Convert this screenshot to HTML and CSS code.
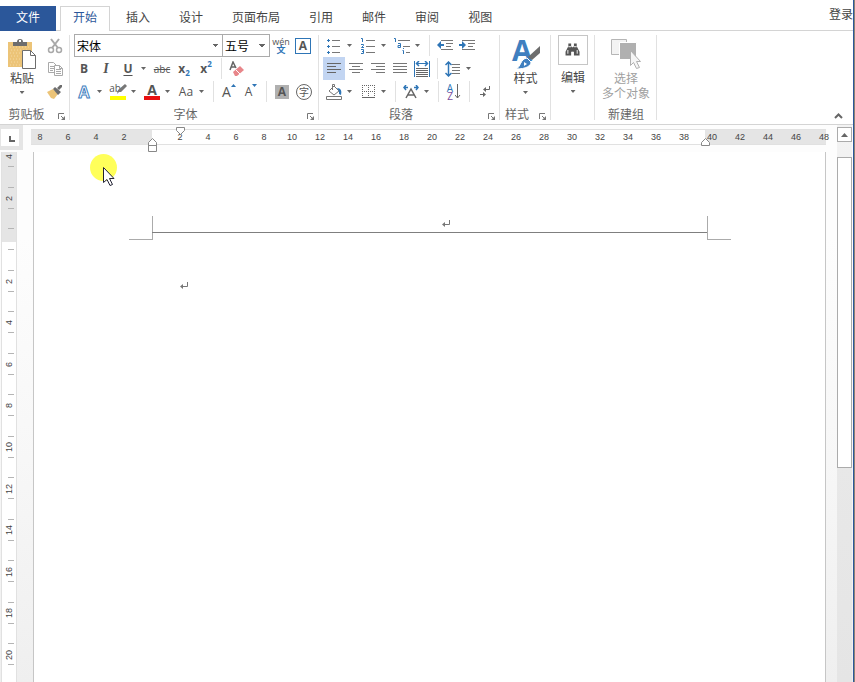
FILE: index.html
```html
<!DOCTYPE html>
<html lang="zh-CN">

<head>
    <meta charset="UTF-8">
    <meta name="viewport" content="width=device-width, initial-scale=1.0">
    <title>文档</title>
    <link rel="stylesheet" href="styles.css">
</head>

<body>
    <div class="window">

        <nav class="tabs">
            <button class="tab file">文件</button>
            <button class="tab active">开始</button>
            <button class="tab">插入</button>
            <button class="tab">设计</button>
            <button class="tab">页面布局</button>
            <button class="tab">引用</button>
            <button class="tab">邮件</button>
            <button class="tab">审阅</button>
            <button class="tab">视图</button>
            <a class="login" href="#">登录</a>
        </nav>

        <div class="ribbon">
            <section class="group clipboard">
                <div class="group-body">
                    <button class="big">
                        <svg width="30" height="32" viewBox="0 0 30 32">
                            <path fill="#ecc478" d="M1 4h24v25H1z" />
                            <path stroke="#f5d9a3" stroke-dasharray="1 2" d="M3 9h20M4 12h18M3 15h12M4 18h9M3 21h12M4 24h9M3 27h12" />
                            <path fill="#6d6d6d" d="M6 4h4a3 3 0 0 1 6 0h4v4H6z" />
                            <path fill="#fff" d="M12 2h2v2h-2z" />
                            <path fill="#fff" stroke="#6d6d6d" d="M15.500 12.500h8l5 5v13h-13z" />
                            <path fill="none" stroke="#6d6d6d" d="M23.500 12.500v5h5" />
                        </svg>
                        <span>粘贴</span>
                        <i class="arrow"></i>
                    </button>
                    <div class="icon-column">
                        <button class="tool" title="剪切">
                            <svg width="16" height="16" viewBox="0 0 16 16" fill="none" stroke="#a9a9a9">
                                <path stroke-width="2" d="M4 1l7 9M12 1L5 10" />
                                <circle cx="4" cy="12" r="2.500" stroke-width="1.500" />
                                <circle cx="12" cy="12" r="2.500" stroke-width="1.500" />
                            </svg>
                        </button>
                        <button class="tool" title="复制">
                            <svg width="16" height="16" viewBox="0 0 16 16" fill="#fff" stroke="#a9a9a9">
                                <path d="M1.500 1.500h5l3 3v7h-8zM3 5.500h4M3 7.500h4M3 9.500h3" />
                                <path d="M7.500 4.500h5l3 3v7h-8zM9 8.500h5M9 10.500h5M9 12.500h5M12.500 4.500v3h3" />
                            </svg>
                        </button>
                        <button class="tool" title="格式刷">
                            <svg width="16" height="16" viewBox="0 0 16 16">
                                <path fill="#ecc478" d="M0 8l6-3 5 5-4 5-3-1z" />
                                <path fill="#6d6d6d" d="M6 5l2-2 6 5-3 3zM10 4l3-3 2 0 0 2-3 3z" />
                            </svg>
                        </button>
                    </div>
                </div>
                <div class="group-footer">
                    <span>剪贴板</span>
                    <button class="launcher" title="剪贴板设置"><svg width="8" height="8" viewBox="0 0 8 8"><path fill="none" stroke="#777" d="M.5 6V.5H6M3 3l3 3" /><path fill="#777" d="M7 3v4H3z" /></svg></button>
                </div>
            </section>

            <section class="group font">
                <div class="group-body rows">
                    <div class="row combos">
                        <select class="font-name" aria-label="字体"><option>宋体</option></select>
                        <select class="font-size" aria-label="字号"><option>五号</option></select>
                        <button class="tool pinyin" title="拼音指南"><span>wén</span><b>文</b></button>
                        <button class="tool" title="字符边框"><span class="boxed">A</span></button>
                    </div>
                    <div class="row">
                        <button class="tool latin bold">B</button>
                        <button class="tool serif">I</button>
                        <button class="tool latin bold under">U</button>
                        <button class="caret" title="下划线"><i class="arrow"></i></button>
                        <button class="tool latin strike">abc</button>
                        <button class="tool latin bold">x<sub>2</sub></button>
                        <button class="tool latin bold">x<sup>2</sup></button>
                        <i class="sep"></i>
                        <button class="tool" title="清除格式">
                            <svg width="16" height="16" viewBox="0 0 16 16">
                                <path fill="none" stroke="#666" stroke-width="1.500" d="M1 9l3-8 3 6M2 6h4" />
                                <path fill="#e8868a" d="M4 11l7-6 4 4-7 6-2 0z" />
                                <path stroke="#fff" d="M7 9l4 4" />
                            </svg>
                        </button>
                    </div>
                    <div class="row">
                        <button class="tool latin outlined">A</button>
                        <button class="caret" title="文本效果"><i class="arrow"></i></button>
                        <button class="tool" title="突出显示">
                            <span class="swatch yellow">ab<svg width="10" height="11" viewBox="0 0 10 11"><path fill="#777" d="M8 0l2 2-6 6-2 0-2 2 1-4z" /></svg></span>
                        </button>
                        <button class="caret" title="突出显示颜色"><i class="arrow"></i></button>
                        <button class="tool" title="字体颜色"><span class="swatch red">A</span></button>
                        <button class="caret" title="更多字体颜色"><i class="arrow"></i></button>
                        <button class="tool latin">Aa</button>
                        <button class="caret" title="更改大小写"><i class="arrow"></i></button>
                        <i class="sep"></i>
                        <button class="tool latin grow" title="增大字号">A<svg width="5" height="3" viewBox="0 0 5 3"><path fill="#2e75b6" d="M0 3l2.500-3L5 3z" /></svg></button>
                        <button class="tool latin shrink" title="减小字号">A<svg width="5" height="3" viewBox="0 0 5 3"><path fill="#2e75b6" d="M0 0l2.500 3L5 0z" /></svg></button>
                        <i class="sep"></i>
                        <button class="tool" title="字符底纹"><span class="shaded">A</span></button>
                        <button class="tool" title="带圈字符"><span class="circled">字</span></button>
                    </div>
                </div>
                <div class="group-footer">
                    <span>字体</span>
                    <button class="launcher" title="字体设置"><svg width="8" height="8" viewBox="0 0 8 8"><path fill="none" stroke="#777" d="M.5 6V.5H6M3 3l3 3" /><path fill="#777" d="M7 3v4H3z" /></svg></button>
                </div>
            </section>

            <section class="group paragraph">
                <div class="group-body rows">
                    <div class="row">
                        <button class="tool" title="项目符号">
                            <svg width="16" height="16" viewBox="0 0 16 16">
                                <path fill="#2e75b6" d="M2 1h1v1h1v1H3v1H2V3H1V2h1zM2 7h1v1h1v1H3v1H2V9H1V8h1zM2 13h1v1h1v1H3v1H2v-1H1v-1h1z" />
                                <path stroke="#777" d="M6 2.500h8M6 8.500h8M6 14.500h8" />
                            </svg>
                        </button>
                        <button class="caret" title="项目符号库"><i class="arrow"></i></button>
                        <button class="tool" title="编号">
                            <svg width="16" height="16" viewBox="0 0 16 16">
                                <path fill="none" stroke="#2e75b6" d="M1 .5h1.500V4M1 6.500h2.500v1L1.500 9.500H4M1 11.500h2.500v4H1M2 13.500h1.500" />
                                <path stroke="#777" d="M6 2.500h9M6 8.500h9M6 14.500h9" />
                            </svg>
                        </button>
                        <button class="caret" title="编号库"><i class="arrow"></i></button>
                        <button class="tool" title="多级列表">
                            <svg width="18" height="16" viewBox="0 0 18 16">
                                <path fill="none" stroke="#2e75b6" d="M1 .5h1.500V4M5 5.500h2.500v4H5v-2h2M10.500 10v1M9.500 12.500h1V16" />
                                <path stroke="#777" d="M5 2.500h12M10 8.500h7M13 14.500h4" />
                            </svg>
                        </button>
                        <button class="caret" title="列表库"><i class="arrow"></i></button>
                        <i class="sep"></i>
                        <button class="tool" title="减少缩进量">
                            <svg width="16" height="11" viewBox="0 0 16 11">
                                <path stroke="#777" d="M4 .5h12M9 3.500h7M9 6.500h5M4 9.500h12" />
                                <path fill="#2e75b6" d="M0 5l4-4v3h3v2H4v3z" />
                            </svg>
                        </button>
                        <button class="tool" title="增加缩进量">
                            <svg width="16" height="11" viewBox="0 0 16 11">
                                <path stroke="#777" d="M3 .5h13M9 3.500h7M9 6.500h5M3 9.500h13" />
                                <path fill="#2e75b6" d="M7 5L3 1v3H0v2h3v3z" />
                            </svg>
                        </button>
                    </div>
                    <div class="row">
                        <button class="tool selected" title="左对齐">
                            <svg width="14" height="11" viewBox="0 0 14 11"><path stroke="#666" d="M0 .5h14M0 3.500h9M0 6.500h14M0 9.500h9" /></svg>
                        </button>
                        <button class="tool" title="居中">
                            <svg width="14" height="11" viewBox="0 0 14 11"><path stroke="#777" d="M0 .5h14M3 3.500h8M0 6.500h14M3 9.500h8" /></svg>
                        </button>
                        <button class="tool" title="右对齐">
                            <svg width="14" height="11" viewBox="0 0 14 11"><path stroke="#777" d="M0 .5h14M5 3.500h9M0 6.500h14M5 9.500h9" /></svg>
                        </button>
                        <button class="tool" title="两端对齐">
                            <svg width="14" height="11" viewBox="0 0 14 11"><path stroke="#777" d="M0 .5h14M0 3.500h14M0 6.500h14M0 9.500h14" /></svg>
                        </button>
                        <button class="tool" title="分散对齐">
                            <svg width="16" height="16" viewBox="0 0 16 16">
                                <path stroke="#2e75b6" d="M.5 0v16M15.500 0v16M3 2.500h10" />
                                <path fill="none" stroke="#2e75b6" stroke-width="1.500" d="M5 0L2.500 2.500 5 5M11 0l2.500 2.500L11 5" />
                                <path stroke="#666" d="M2 7.500h12M2 9.500h12M2 11.500h12M2 13.500h12M2 15.500h12" />
                            </svg>
                        </button>
                        <i class="sep"></i>
                        <button class="tool" title="行距">
                            <svg width="16" height="16" viewBox="0 0 16 16">
                                <path fill="none" stroke="#2e75b6" stroke-width="1.500" d="M3.500 1v14M.5 4l3-3 3 3M.5 12l3 3 3-3" />
                                <path stroke="#777" d="M7 3.500h8M7 6.500h8M7 9.500h8M7 12.500h8" />
                            </svg>
                        </button>
                        <button class="caret" title="行距选项"><i class="arrow"></i></button>
                    </div>
                    <div class="row">
                        <button class="tool" title="底纹">
                            <svg width="18" height="16" viewBox="0 0 18 16">
                                <path fill="#fff" stroke="#777" d="M4 7l5-5 5 5-5 4zM7.500 6V.5h2V3" />
                                <path fill="#2e75b6" d="M12 4c4 0 5 3 4 7l-2-1V7z" />
                                <path fill="#fff" stroke="#777" d="M1.500 12.500h15v3h-15z" />
                            </svg>
                        </button>
                        <button class="caret" title="底纹颜色"><i class="arrow"></i></button>
                        <button class="tool" title="边框">
                            <svg width="13" height="13" viewBox="0 0 13 13">
                                <path stroke="#666" stroke-dasharray="1 1" d="M0 .5h13M0 6.500h13M.5 0v12M6.500 0v12M12.500 0v12" />
                                <path stroke="#666" d="M0 12.500h13" />
                            </svg>
                        </button>
                        <button class="caret" title="边框选项"><i class="arrow"></i></button>
                        <i class="sep"></i>
                        <button class="tool" title="中文版式">
                            <svg width="16" height="14" viewBox="0 0 16 14">
                                <path fill="none" stroke="#666" stroke-width="1.500" d="M3 13l5-9 5 9M5 10h6" />
                                <path fill="none" stroke="#2e75b6" stroke-width="1.500" d="M3 0L1 2.500 3 5M13 0l2 2.500L13 5M1 2.500h4M11 2.500h4" />
                            </svg>
                        </button>
                        <button class="caret" title="中文版式选项"><i class="arrow"></i></button>
                        <i class="sep"></i>
                        <button class="tool sort" title="排序">
                            <span>A<b>Z</b></span>
                            <svg width="6" height="15" viewBox="0 0 6 15"><path fill="none" stroke="#666" d="M2.500 0v14M0 11l2.500 3L5 11" /></svg>
                        </button>
                        <i class="sep"></i>
                        <button class="tool" title="显示编辑标记">
                            <svg width="12" height="13" viewBox="0 0 12 13">
                                <path fill="none" stroke="#666" d="M10.500 1v3.500H5M1 9.500h5" />
                                <path fill="#666" d="M4 4.500L7 2v5zM7 9.500L4 7v5z" />
                            </svg>
                        </button>
                    </div>
                </div>
                <div class="group-footer">
                    <span>段落</span>
                    <button class="launcher" title="段落设置"><svg width="8" height="8" viewBox="0 0 8 8"><path fill="none" stroke="#777" d="M.5 6V.5H6M3 3l3 3" /><path fill="#777" d="M7 3v4H3z" /></svg></button>
                </div>
            </section>

            <section class="group styles">
                <div class="group-body">
                    <button class="big">
                        <svg width="30" height="32" viewBox="0 0 30 32">
                            <text class="style-letter" x="1" y="23">A</text>
                            <path fill="#6d6d6d" d="M29 8v7l-8 7-4-3z" />
                            <path fill="#3f7fbf" stroke="#fff" d="M16 20l4 4c0 4-5 7-15 7 5-2 4-10 11-11z" />
                            <path fill="#fff" d="M13 24l3 2-3 2z" />
                        </svg>
                        <span>样式</span>
                        <i class="arrow"></i>
                    </button>
                </div>
                <div class="group-footer">
                    <span>样式</span>
                    <button class="launcher" title="样式窗格"><svg width="8" height="8" viewBox="0 0 8 8"><path fill="none" stroke="#777" d="M.5 6V.5H6M3 3l3 3" /><path fill="#777" d="M7 3v4H3z" /></svg></button>
                </div>
            </section>

            <section class="group editing">
                <div class="group-body">
                    <button class="big">
                        <svg class="framed" width="30" height="30" viewBox="0 0 30 30">
                            <path fill="#555" d="M10 8h3v3l1 1h1l1-1V8h3v3l3 6v4h-6v-4h-3v4H7v-4l3-6z" />
                            <path stroke="#fff" d="M10 11.500h3M16 11.500h3M9.500 15v4M19.500 15v4M14.500 17v4" />
                        </svg>
                        <span>编辑</span>
                        <i class="arrow"></i>
                    </button>
                </div>
                <div class="group-footer"></div>
            </section>

            <section class="group custom">
                <div class="group-body">
                    <button class="big" disabled>
                        <svg width="30" height="32" viewBox="0 0 30 32">
                            <path fill="#f3f3f3" stroke="#b5b5b5" d="M.5 1.500h15v15H.5z" />
                            <path fill="#b0b0b0" stroke="#fff" d="M8.500 4.500h17v17h-17z" />
                            <path fill="#f5f5f5" stroke="#b0b0b0" d="M19.500 12.500v15l3-3 3 6 3-1-3-6h4z" />
                        </svg>
                        <span>选择<br>多个对象</span>
                    </button>
                </div>
                <div class="group-footer"><span>新建组</span></div>
            </section>

            <button class="collapse" title="折叠功能区">
                <svg width="9" height="6" viewBox="0 0 9 6"><path fill="none" stroke="#666" stroke-width="2" d="M1 5l3.500-3.500L8 5" /></svg>
            </button>
        </div>

        <main class="workspace">
            <div class="tab-stop"><button title="制表符"><i></i></button></div>

            <div class="h-ruler">
                <div class="scale">
                    <span>8</span><span>6</span><span>4</span><span>2</span><span></span><span>2</span><span>4</span><span>6</span><span>8</span><span>10</span><span>12</span><span>14</span><span>16</span><span>18</span><span>20</span><span>22</span><span>24</span><span>26</span><span>28</span><span>30</span><span>32</span><span>34</span><span>36</span><span>38</span><span>40</span><span>42</span><span>44</span><span>46</span><span>48</span>
                </div>
                <svg class="marker first-line" width="9" height="8" viewBox="0 0 9 8"><path fill="#fff" stroke="#888" d="M.5.5h8v3l-4 4-4-4z" /></svg>
                <svg class="marker left-indent" width="9" height="14" viewBox="0 0 9 14"><path fill="#fff" stroke="#888" d="M.5 13.500v-9l4-4 4 4v9zM.5 7.500h8" /></svg>
                <svg class="marker right-indent" width="9" height="8" viewBox="0 0 9 8"><path fill="#fff" stroke="#888" d="M.5 7.500v-3l4-4 4 4v3z" /></svg>
            </div>

            <div class="v-ruler">
                <span>4</span><span>2</span><span></span><span>2</span><span>4</span><span>6</span><span>8</span><span>10</span><span>12</span><span>14</span><span>16</span><span>18</span><span>20</span>
            </div>

            <article class="page">
                <header class="page-header">
                    <i class="corner left"></i>
                    <div class="header-text">
                        <svg width="8" height="8" viewBox="0 0 8 8"><path fill="none" stroke="#777" d="M7.500 0v4.500H2" /><path fill="#777" d="M0 4.500L3 2v5z" /></svg>
                    </div>
                    <i class="corner right"></i>
                </header>
                <p class="paragraph-text">
                    <svg width="8" height="8" viewBox="0 0 8 8"><path fill="none" stroke="#777" d="M7.500 0v4.500H2" /><path fill="#777" d="M0 4.500L3 2v5z" /></svg>
                </p>
                <div class="pointer">
                    <svg width="14" height="21" viewBox="0 0 14 21"><path fill="#fff" stroke="#223" d="M1.500 1.500v15l3.500-3 3 6 2.500-1-3-6h4.500z" /></svg>
                </div>
            </article>

            <div class="scrollbar">
                <button class="scroll-up" title="向上滚动"><svg width="7" height="4" viewBox="0 0 7 4"><path fill="#666" d="M0 4l3.500-4L7 4z" /></svg></button>
                <div class="thumb"></div>
            </div>
        </main>
    </div>
</body>

</html>
```
FILE: styles.css
```css
* {
    box-sizing: border-box;
}

body {
    margin: 0;
    padding-right: 1px;
    background: #8c8374;
    font-family: "Noto Sans CJK SC", sans-serif;
    font-size: 12px;
    line-height: 16px;
    color: #444;
}

button {
    margin: 0;
    padding: 0;
    border: none;
    background: none;
    font: inherit;
    color: inherit;
}

svg {
    display: block;
    flex: none;
}

.window {
    display: flex;
    flex-direction: column;
    height: 100vh;
    overflow: hidden;
    background: #fff;
    border-right: 1px solid #2b579a;
}

/* Tabs */
.tabs {
    display: flex;
    flex: none;
    gap: 3px;
    height: 31px;
    padding-top: 6px;
    border-bottom: 1px solid #d4d4d4;
}

.tab {
    height: 25px;
    padding: 0 12px 4px;
    border: 1px solid transparent;
    border-bottom: none;
    white-space: nowrap;
}

.tab.file {
    padding: 0 15px 4px;
    margin-right: 1px;
    background: #2b579a;
    color: #fff;
}

.tab.active {
    border-color: #d4d4d4;
    background: #fff;
    color: #2b579a;
}

.login {
    margin-left: auto;
    color: #444;
    text-decoration: none;
    white-space: nowrap;
}

/* Ribbon */
.ribbon {
    display: flex;
    flex: none;
    padding-top: 3px;
    border-bottom: 1px solid #d4d4d4;
}

.group {
    display: flex;
    flex-direction: column;
    flex: none;
    background: linear-gradient(#e1e1e1, #e1e1e1) right 1px / 1px 85px no-repeat;
}

.clipboard {
    width: 70px;
}

.font {
    width: 249px;
    padding-left: 3px;
}

.paragraph {
    width: 181px;
    padding-left: 4px;
}

.styles {
    width: 51px;
}

.editing {
    width: 44px;
}

.custom {
    width: 62px;
}

.group-body {
    display: flex;
    justify-content: center;
    height: 69px;
}

.group-body.rows {
    flex-direction: column;
}

.clipboard .group-body {
    justify-content: flex-start;
}

.row,
.icon-column {
    display: flex;
}

.icon-column {
    flex-direction: column;
}

.combos {
    padding-left: 1px;
}

.group-footer {
    display: flex;
    align-items: center;
    height: 21px;
    color: #666;
}

.group-footer span {
    flex: 1;
    text-align: center;
}

.launcher {
    display: flex;
    justify-content: center;
    width: 17px;
    padding-top: 6px;
}

.font .group-footer,
.paragraph .group-footer {
    margin-left: -4px;
}

.big {
    display: flex;
    flex-direction: column;
    align-items: center;
    width: 44px;
    padding-top: 4px;
    line-height: 15px;
    white-space: nowrap;
}

.big .arrow {
    margin-top: 6px;
}

.big:disabled {
    color: #a0a0a0;
}

.big svg {
    overflow: visible;
}

.big .framed {
    border: 1px solid #c6c6c6;
}

.editing .big {
    width: 32px;
    padding-top: 1px;
}

.editing .big span {
    padding-top: 4px;
}

.style-letter {
    font: bold 29px "Open Sans", sans-serif;
    fill: #3f7fbf;
}

.tool {
    display: flex;
    align-items: center;
    justify-content: center;
    flex: none;
    width: 22px;
    height: 23px;
    color: #555;
}

.tool.selected {
    background: #c2d5f2;
}

.caret {
    flex: none;
    width: 12px;
    height: 23px;
    padding-left: 2px;
}

.arrow {
    display: block;
    width: 5px;
    height: 3px;
    background: #666;
    clip-path: polygon(0 0, 100% 0, 50% 100%);
}

.sep {
    flex: none;
    width: 1px;
    height: 21px;
    margin: 1px 4px;
    background: #e1e1e1;
}

/* Font group */
select {
    appearance: none;
    height: 23px;
    margin: 0;
    padding: 0 2px;
    border: 1px solid #ababab;
    border-radius: 0;
    background: #fff conic-gradient(from 315deg at 50% 100%, #666 90deg, transparent 0) right 4px center / 6px 3px no-repeat;
    font: inherit;
    color: #000;
}

.font-name {
    width: 149px;
}

.font-size {
    width: 48px;
    margin-left: -1px;
}

.latin {
    font-family: "Open Sans", sans-serif;
}

.bold {
    font-weight: bold;
}

.serif {
    font-family: "Liberation Serif", serif;
    font-size: 14px;
    font-style: italic;
    font-weight: bold;
}

.under {
    text-decoration: underline;
    text-underline-offset: 2px;
}

.strike {
    font-size: 10px;
    text-decoration: line-through;
}

.tool sub,
.tool sup {
    font-size: 8px;
    line-height: 8px;
    color: #2e75b6;
}

.tool sub {
    align-self: flex-end;
    padding-bottom: 3px;
}

.tool sup {
    align-self: flex-start;
    padding-top: 3px;
}

.pinyin {
    flex-direction: column;
    font-family: "Open Sans", "Noto Sans CJK SC", sans-serif;
    font-size: 9px;
    line-height: 8px;
}

.pinyin b {
    color: #2e75b6;
}

.boxed,
.shaded,
.swatch {
    font-family: "Open Sans", sans-serif;
    font-weight: bold;
    text-align: center;
}

.boxed {
    width: 16px;
    height: 16px;
    border: 1px solid #2e75b6;
    line-height: 14px;
}

.shaded {
    width: 14px;
    height: 14px;
    background: #b0b0b0;
    line-height: 14px;
}

.circled {
    width: 16px;
    height: 16px;
    border: 1px solid #666;
    border-radius: 50%;
    font-size: 10px;
    line-height: 14px;
}

.outlined {
    font-size: 16px;
    font-weight: bold;
    color: #fff;
    -webkit-text-stroke: 1px #3f7fbf;
}

.swatch {
    display: flex;
    justify-content: center;
    width: 16px;
    height: 16px;
    border-bottom: 4px solid #ff0;
    line-height: 12px;
}

.swatch.red {
    border-color: #e81010;
    font-size: 14px;
}

.swatch.yellow {
    font-size: 10px;
    font-weight: normal;
    line-height: 8px;
}

.swatch.yellow svg {
    margin-left: -4px;
}

.grow svg,
.shrink svg {
    align-self: flex-start;
    margin-top: 4px;
}

.grow {
    font-size: 14px;
}

.sort {
    gap: 2px;
}

.sort span {
    display: flex;
    flex-direction: column;
    font: 10px/8px "Open Sans", sans-serif;
    color: #2e75b6;
}

.sort b {
    font-weight: normal;
    color: #7b4fa0;
}

.collapse {
    align-self: flex-end;
    margin-left: auto;
    padding: 5px 10px;
}

/* Document area */
.workspace {
    display: grid;
    grid-template: 27px 1fr / 33px minmax(0, 1fr) 11px 16px;
    flex: 1;
    min-height: 0;
    background: linear-gradient(#fdfdfd 20%, #f7f7f7 60%, #efefef);
}

.tab-stop {
    width: 23px;
    height: 25px;
    padding: 4px 0 0 1px;
    background: #e5e5e5;
}

.tab-stop button {
    display: flex;
    align-items: center;
    justify-content: center;
    width: 18px;
    height: 17px;
    background: #fff;
}

.tab-stop i {
    width: 6px;
    height: 6px;
    margin: 3px 0 0 3px;
    border: solid #666;
    border-width: 0 0 2px 2px;
}

.h-ruler {
    position: relative;
    height: 16px;
    margin: 4px 0 0 -2px;
    border: solid #e1e1e1;
    border-width: 1px 0;
    background: linear-gradient(90deg, #e5e5e5 121px, #fff 121px, #fff 674px, #e5e5e5 674px);
    font: 9px/14px "Liberation Sans", sans-serif;
}

.scale {
    display: flex;
    margin-left: -5px;
}

.scale span {
    flex: none;
    width: 28px;
    text-align: center;
}

.marker {
    position: absolute;
}

.first-line {
    left: 145px;
    top: -3px;
}

.left-indent {
    left: 117px;
    top: 8px;
}

.right-indent {
    left: 670px;
    top: 8px;
}

.v-ruler {
    grid-row: 2;
    grid-column: 1;
    display: flex;
    flex-direction: column;
    width: 16px;
    min-height: 0;
    margin-left: 1px;
    overflow: hidden;
    border: solid #e1e1e1;
    border-width: 0 1px;
    background: linear-gradient(#e5e5e5 90px, #fff 90px);
    font: 9px/10px "Liberation Sans", sans-serif;
}

.v-ruler span {
    display: flex;
    align-items: center;
    justify-content: center;
    flex: none;
    width: 10px;
    height: 42px;
    margin-left: 2px;
    background:
        linear-gradient(#b5b5b5, #b5b5b5) 0 10px / 6px 1px no-repeat,
        linear-gradient(#b5b5b5, #b5b5b5) 0 31px / 6px 1px no-repeat;
    writing-mode: vertical-rl;
    transform: rotate(180deg);
}

.v-ruler span:nth-child(odd) {
    height: 41px;
}

.v-ruler span:first-child {
    margin-top: -16px;
}

.page {
    grid-row: 2;
    grid-column: 2;
    position: relative;
    min-height: 0;
    border: solid #c6c6c6;
    border-width: 0 1px;
    background: #fff;
}

.page-header {
    display: flex;
    margin: 64px 94px 0 95px;
}

.corner {
    flex: none;
    width: 24px;
    height: 24px;
    border-bottom: 1px solid #ababab;
}

.corner.left {
    border-right: 1px solid #ababab;
}

.corner.right {
    border-left: 1px solid #ababab;
}

.header-text {
    display: flex;
    align-items: center;
    justify-content: center;
    flex: 1;
    height: 17px;
    margin: 0 -1px;
    padding-left: 32px;
    border-bottom: 1px solid #7f7f7f;
}

.paragraph-text {
    margin: 42px 118px 0;
    padding-left: 28px;
}

/* Mouse pointer with its highlight */
.pointer {
    position: absolute;
    left: 56px;
    top: 2px;
    width: 27px;
    height: 27px;
    padding: 12px 0 0 12px;
    border-radius: 50%;
    background: #ffff5a;
}

.scrollbar {
    grid-row: 1 / 3;
    grid-column: 4;
    display: flex;
    flex-direction: column;
    min-height: 0;
    margin-right: 1px;
    padding-top: 2px;
    background: linear-gradient(#f3f3f3, #e8e8e8 60%, #e5e5e5);
}

.scroll-up {
    display: flex;
    align-items: center;
    justify-content: center;
    flex: none;
    height: 15px;
    border: 1px solid #ababab;
    background: #fff;
}

.thumb {
    flex: none;
    height: 56%;
    margin-top: 15px;
    border: 1px solid #ababab;
    background: #fff;
}
```
